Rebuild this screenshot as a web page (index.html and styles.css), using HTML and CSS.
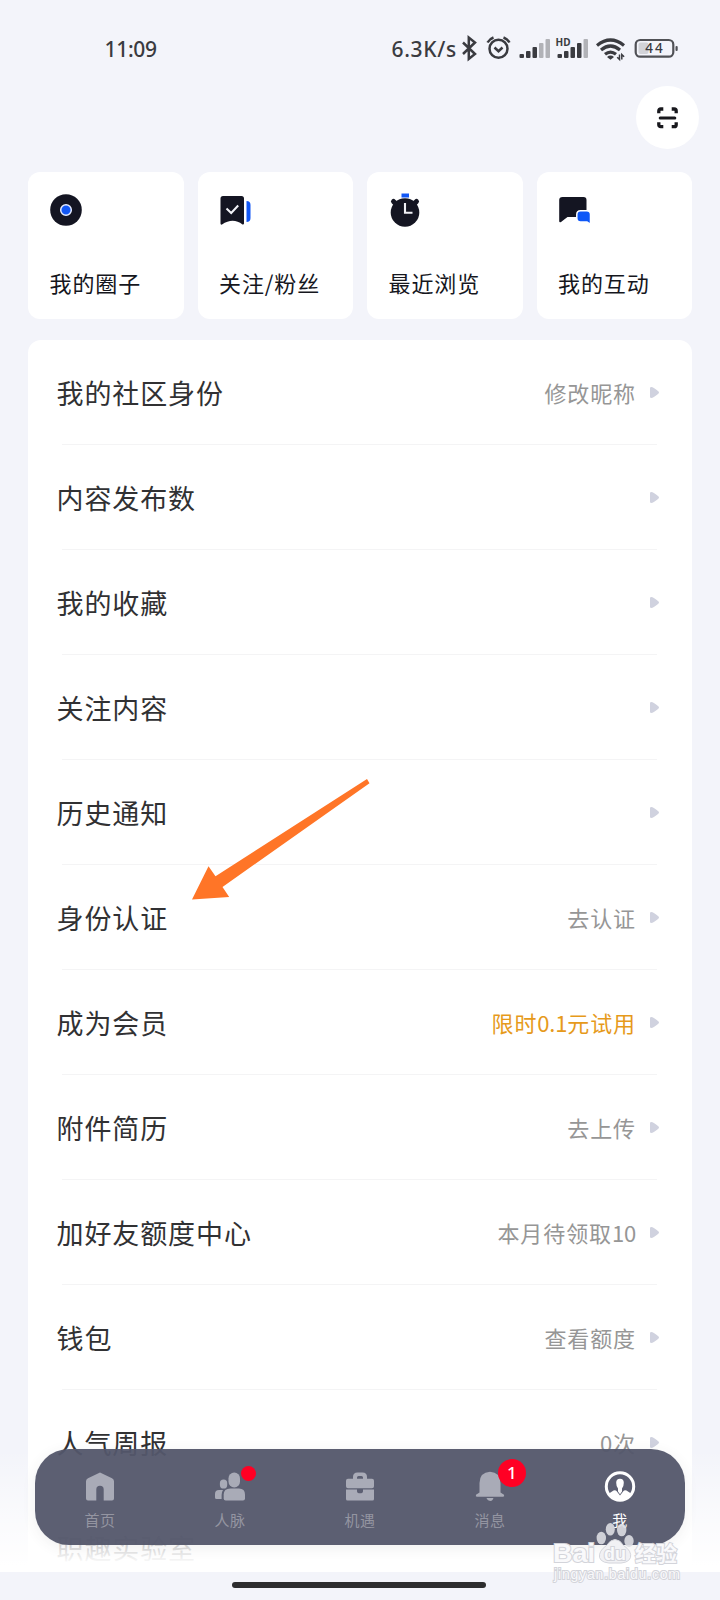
FILE: index.html
```html
<!DOCTYPE html>
<html lang="zh-CN">
<head>
<meta charset="utf-8">
<title>我</title>
<link rel="stylesheet" href="styles.css">
</head>
<body>
<div class="screen">
  <header class="status">
    <span class="clock">11:09</span>
    <div class="status-right">
      <span class="speed">6.3K/s</span>
      <svg class="status-icons" width="220" height="32" viewBox="460 32 220 32">
        <g fill="none" stroke="#3a3b40" stroke-width="2.5">
          <path d="M463 42.500l12 11.500-6.200 5V37.500l6.200 5L463 54"/>
          <circle cx="498.500" cy="48.800" r="9"/>
          <path d="M494.500 47.500l4 3.700 4-3.700M487.500 42.500q2-3.500 6-5M509.500 42.500q-2-3.500-6-5"/>
        </g>
        <g fill="#3a3b40">
          <rect x="519.500" y="54" width="4.500" height="4" rx="1"/><rect x="526" y="51" width="4.500" height="7" rx="1"/><rect x="532.500" y="47" width="4.500" height="11" rx="1"/>
          <rect x="557.500" y="54" width="4.500" height="4" rx="1"/><rect x="564" y="51" width="4.500" height="7" rx="1"/><rect x="570.500" y="47" width="4.500" height="11" rx="1"/><rect x="577" y="43" width="4.500" height="15" rx="1"/>
        </g>
        <g fill="#b1b2b7">
          <rect x="539" y="43" width="4.500" height="15" rx="1"/><rect x="545.500" y="39" width="4.500" height="19" rx="1"/><rect x="583.500" y="39" width="4.500" height="19" rx="1"/>
        </g>
        <text class="hd" x="555.500" y="46" textLength="15">HD</text>
        <g fill="none" stroke="#3a3b40" stroke-width="3.200">
          <path d="M597 45.500q13.500-11 27 0M601 50q9.500-8 19 0M605 54.300q5.500-4.500 11 0"/>
        </g>
        <path fill="#3a3b40" d="M607 57q3.500-2.800 7 0l-3.500 2.800z"/>
        <path fill="none" stroke="#3a3b40" stroke-width="1.500" d="M619.500 54.500v5l-2.300-2.300M621.800 59.500v-5l2.300 2.300"/>
        <rect x="638.500" y="42.500" width="10" height="11.500" rx="2" fill="#d2d3d8"/>
        <rect x="635.700" y="40" width="37.600" height="16.700" rx="4.500" fill="none" stroke="#505156" stroke-width="2.200"/>
        <rect x="675.500" y="46" width="2.200" height="5" rx="1" fill="#505156"/>
        <text class="batt" x="654" y="53.300" text-anchor="middle" textLength="17.500">44</text>
      </svg>
    </div>
  </header>
  <div class="toolbar">
    <div class="scan">
      <svg width="24" height="24" viewBox="0 0 24 24" fill="none" stroke="#18181d" stroke-width="3.300" stroke-linejoin="round">
        <path d="M2.800 7.300V5q0-2 2-2h2.500M15.700 3h2.500q2 0 2 2v2.300M20.200 16.200v2.500q0 2-2 2h-2.500M7.300 20.700H4.800q-2 0-2-2v-2.500"/>
        <path d="M4.200 11.900h14.600" stroke-linecap="round" stroke-width="3"/>
      </svg>
    </div>
  </div>
  <section class="cards">
    <div class="card">
      <svg width="40" height="40" viewBox="0 0 40 40"><circle cx="17" cy="20" r="15.800" fill="#141522"/><circle cx="17" cy="20" r="5.300" fill="#1257f5" stroke="#e6ecff" stroke-width="1.500"/></svg>
      <span>我的圈子</span>
    </div>
    <div class="card">
      <svg width="40" height="40" viewBox="0 0 40 40"><path d="M5 6h18.500q2.500 0 2.500 2.500v25q0 1.300-1.500 1-9.500-7.500-20.500 0-1.500.5-1.500-1v-25Q2.500 6 5 6z" fill="#141522"/><path d="M8.500 18.500l4.700 4.500 7-7.500" fill="none" stroke="#f2f3f8" stroke-width="2"/><path d="M28.500 11q4 0 4 4v13q0 4-4 4z" fill="#1257f5"/></svg>
      <span>关注/粉丝</span>
    </div>
    <div class="card">
      <svg width="40" height="40" viewBox="0 0 40 40"><circle cx="17" cy="22.500" r="14.300" fill="#141522"/><path d="M5.500 11.500l3 3M28.500 11.500l-3 3" stroke="#141522" stroke-width="5" stroke-linecap="round"/><path d="M13.500 3.500h7.500v4h-7.500z" fill="#1257f5"/><path d="M17 13v9.800h7.500" fill="none" stroke="#f0f0f5" stroke-width="2.100"/></svg>
      <span>最近浏览</span>
    </div>
    <div class="card">
      <svg width="40" height="40" viewBox="0 0 40 40"><path d="M5.500 7h21q3 0 3 3v17h-19L4 32q-1.800.8-1.800-1V10q0-3 3.300-3z" fill="#141522"/><path d="M23.500 20.800h6.200q3.800 0 3.800 3.800v9.800l-3.500-2.400h-6.500q-3.700 0-3.700-3.700v-3.700q0-3.800 3.700-3.800z" fill="#0e57f7" stroke="#fff" stroke-width="1.500"/></svg>
      <span>我的互动</span>
    </div>
  </section>
  <main class="list">
    <div class="row"><span>我的社区身份</span><em>修改昵称</em></div>
    <div class="row"><span>内容发布数</span><em></em></div>
    <div class="row"><span>我的收藏</span><em></em></div>
    <div class="row"><span>关注内容</span><em></em></div>
    <div class="row"><span>历史通知</span><em></em></div>
    <div class="row"><span>身份认证</span><em>去认证</em></div>
    <div class="row"><span>成为会员</span><em class="gold">限时<b>0.1</b>元试用</em></div>
    <div class="row"><span>附件简历</span><em>去上传</em></div>
    <div class="row"><span>加好友额度中心</span><em>本月待领取<b>10</b></em></div>
    <div class="row"><span>钱包</span><em>查看额度</em></div>
    <div class="row"><span>人气周报</span><em>0次</em></div>
    <div class="row"><span>职趣实验室</span></div>
  </main>
  <svg class="pointer" width="180" height="122" viewBox="191 779 180 122"><path fill="#ff7527" d="M367 779l2.500 4.300L222.500 887l6.700 10L192 899.500l16.500-33.300 7 10z"/></svg>
  <div class="fade"></div>
  <nav class="tabs">
    <div class="tab">
      <svg width="40" height="36" viewBox="0 0 40 36"><path fill="#a9abb7" d="M20 3.600l12 5.600q2 1 2 3v17.300q0 2-2 2h-8.300V20.500q0-3.700-3.700-3.700t-3.700 3.700v11H8q-2 0-2-2V12.200q0-2 2-3z"/></svg>
      <span>首页</span>
    </div>
    <div class="tab">
      <svg width="40" height="36" viewBox="0 0 40 36" fill="#a9abb7"><rect x="18.500" y="3.500" width="11.500" height="15" rx="5.700"/><path d="M20.500 19.500h8.500q6 0 6 6v4q0 2-2 2H15.700q-2 0-2-2v-4q0-6 6.800-6z"/><rect x="9.900" y="10.500" width="7.300" height="9" rx="3.600"/><path d="M9 21h4q-1.400 2-1.400 5v4H6.500q-1.500 0-1.500-1.500V25q0-4 4-4z"/></svg>
      <span>人脉</span><i class="dot"></i>
    </div>
    <div class="tab">
      <svg width="40" height="36" viewBox="0 0 40 36" fill="#a9abb7"><path fill-rule="evenodd" d="M13 9.700V8q0-4.500 4.500-4.500h5Q27 3.500 27 8v1.700h5q2 0 2 2v5.600q0 2-2 2H8q-2 0-2-2v-5.600q0-2 2-2zm4 0h6V8.500q0-1.500-1.500-1.500h-3Q17 7 17 8.500z"/><path d="M6 20.500h11v1.700q0 2 3 2t3-2v-1.700h11v9.500q0 1.500-1.500 1.500h-25Q6 31.500 6 30z"/></svg>
      <span>机遇</span>
    </div>
    <div class="tab">
      <svg width="40" height="36" viewBox="0 0 40 36" fill="#a9abb7"><path d="M20 2.700q10.300.5 10.500 11.300v9.500l3.500 2.200q.8 2-1 2H7q-1.800 0-1-2l3.500-2.200V14Q9.700 3.200 20 2.700z"/><path d="M16.500 29h7q-1 3-2.500 3-3.500 0-4.500-3z"/></svg>
      <span>消息</span><i class="badge">1</i>
    </div>
    <div class="tab active">
      <svg width="40" height="36" viewBox="0 0 40 36"><circle cx="20" cy="17.500" r="13.700" fill="none" stroke="#fff" stroke-width="3"/><path fill="#fff" d="M16.200 13.800q0-4 3.800-4t3.800 4q0 3.700-1.800 5.700v3l-2 2.800-2-2.800v-3q-1.800-2-1.800-5.700zM9 24.500l4.500-3q2-.8 3 .5l3.500 4.500 3.500-4.500q1-1.300 3-.5l4.500 3q-4 6.500-11 6.500T9 24.500z"/></svg>
      <span>我</span>
    </div>
  </nav>
  <footer class="gesture"><div class="home-bar"></div></footer>
  <svg class="watermark" width="140" height="70" viewBox="550 1520 140 70">
    <g fill="#dcdde2" fill-opacity=".9">
      <ellipse cx="601.300" cy="1538" rx="4.700" ry="6.300"/><ellipse cx="610.300" cy="1529.200" rx="4.500" ry="6.300"/><ellipse cx="621.700" cy="1530" rx="4.700" ry="6.300"/><ellipse cx="629" cy="1541" rx="4.700" ry="6"/>
    </g>
    <path fill="#f1f1f4" stroke="#d5d6dc" d="M615 1539.500q5 0 8.500 6 8.500 5.500 7 12-2 6.500-15.500 5.500-13.500 1-15.500-5.500-1-6.500 7-12 4-6 8.500-6z"/>
    <text class="wm-main" x="553" y="1561.500" textLength="42" lengthAdjust="spacingAndGlyphs">Bai</text>
    <text class="wm-du" x="604" y="1559.500" textLength="22">du</text>
    <text class="wm-cn" x="635" y="1560.500">经验</text>
    <text class="wm-url" x="554" y="1578.500" textLength="126">jingyan.baidu.com</text>
  </svg>
</div>
</body>
</html>
```
FILE: styles.css
```css
* { box-sizing: border-box; }
body { margin: 0; font-family: "Noto Sans CJK SC", sans-serif; }
.screen {
  position: relative;
  display: flex;
  flex-direction: column;
  width: 720px;
  height: 1600px;
  overflow: hidden;
  background: #f3f4fa;
}
.status {
  flex: none;
  display: flex;
  justify-content: space-between;
  align-items: center;
  height: 86px;
  padding: 10px 40px 0 104.5px;
  color: #3a3b40;
  font: 500 21px/32px "Noto Sans", sans-serif;
}
.status-right { display: flex; align-items: center; }
.speed { width: 68.500px; padding-top: 1px; letter-spacing: .7px; white-space: nowrap; }
.clock { padding-top: 1px; letter-spacing: -.3px; }
.status-icons { display: block; }
.hd { font: 700 10px "Noto Sans", sans-serif; fill: #3a3b40; }
.batt { font: 500 13.500px "Noto Sans", sans-serif; fill: #3a3b40; }
.toolbar { flex: none; display: flex; justify-content: flex-end; height: 86px; padding-right: 21px; }
.scan {
  display: flex;
  align-items: center;
  justify-content: center;
  width: 63px;
  height: 63px;
  border-radius: 50%;
  background: #fff;
}
.cards {
  flex: none;
  display: grid;
  grid-template-columns: repeat(4, 1fr);
  gap: 14px;
  padding: 0 28px;
}
.card {
  display: flex;
  flex-direction: column;
  justify-content: space-between;
  height: 147px;
  padding: 18px 0 20.5px 21.5px;
  border-radius: 12px;
  background: #fff;
  color: #15161d;
  font-size: 22px;
  line-height: 34px;
  letter-spacing: .9px;
  white-space: nowrap;
}
.card svg { margin-left: -1px; }
.list {
  flex: none;
  height: 1232px;
  margin: 21px 28px 0;
  overflow: hidden;
  border-radius: 13px 13px 0 0;
  background: #fff;
}
.row {
  position: relative;
  display: flex;
  align-items: center;
  justify-content: space-between;
  height: 105px;
  padding: 0 33px 0 28.5px;
  color: #313133;
  font-size: 27px;
  letter-spacing: .9px;
}
.row::after {
  content: "";
  position: absolute;
  left: 34px;
  right: 35px;
  bottom: 0;
  height: 1px;
  background: #f4f4f5;
}
.row em {
  display: flex;
  align-items: center;
  padding-bottom: 2px;
  color: #969696;
  font-size: 22px;
  font-style: normal;
}
.row em::after {
  content: "";
  width: 9px;
  height: 11px;
  margin: 2px 0 0 14px;
  background: #d0d2df;
  clip-path: path("M0 1Q0 0 1.500 0Q3 0 8 4Q10 5.500 8 7Q3 11 1.500 11Q0 11 0 10Z");
}
.row b { font-weight: inherit; letter-spacing: -.2px; }
.row .gold { color: #e69a1b; }
.pointer { position: absolute; left: 191px; top: 779px; }
.fade {
  position: absolute;
  left: 0;
  right: 0;
  top: 1449px;
  height: 123px;
  background: linear-gradient(rgba(255, 255, 255, 0), rgba(255, 255, 255, .78) 75%, #fff 95%);
}
.tabs {
  position: absolute;
  left: 35px;
  right: 35px;
  top: 1449px;
  display: flex;
  height: 96px;
  border-radius: 34px;
  background: rgba(83, 86, 106, .95);
  box-shadow: 0 3px 14px rgba(60, 60, 70, .08);
}
.tab {
  position: relative;
  flex: 1;
  display: flex;
  flex-direction: column;
  align-items: center;
  padding-top: 20px;
  color: #9495a1;
  font-size: 15px;
  line-height: 20px;
  letter-spacing: .5px;
}
.tab span { margin-top: 5px; }
.tab.active { color: #fff; }
.dot {
  position: absolute;
  left: 76px;
  top: 17px;
  width: 15px;
  height: 15px;
  border-radius: 50%;
  background: #ff0024;
}
.badge {
  position: absolute;
  left: 73px;
  top: 10px;
  width: 28px;
  height: 28px;
  border-radius: 50%;
  background: #ff0024;
  color: #fff;
  font: 500 17px/28px "Noto Sans", sans-serif;
  text-align: center;
}
.gesture {
  position: absolute;
  left: 0;
  right: 0;
  bottom: 0;
  display: flex;
  justify-content: center;
  height: 28px;
  padding: 10px 3px 0 0;
  background: #f3f4fa;
}
.home-bar { width: 254px; height: 6px; border-radius: 3px; background: #2d2d2f; }
.watermark { position: absolute; left: 550px; top: 1520px; }
.watermark text {
  fill: #f9f9fb;
  stroke: #d3d4da;
  stroke-width: 2px;
  paint-order: stroke;
}
.wm-main { font: 700 25px "Liberation Sans", sans-serif; }
.wm-du { font: 700 18px "Liberation Sans", sans-serif; }
.wm-cn { font: 700 21px "Noto Sans CJK SC", sans-serif; }
.wm-url { font: 400 14px "Liberation Sans", sans-serif; }
```
